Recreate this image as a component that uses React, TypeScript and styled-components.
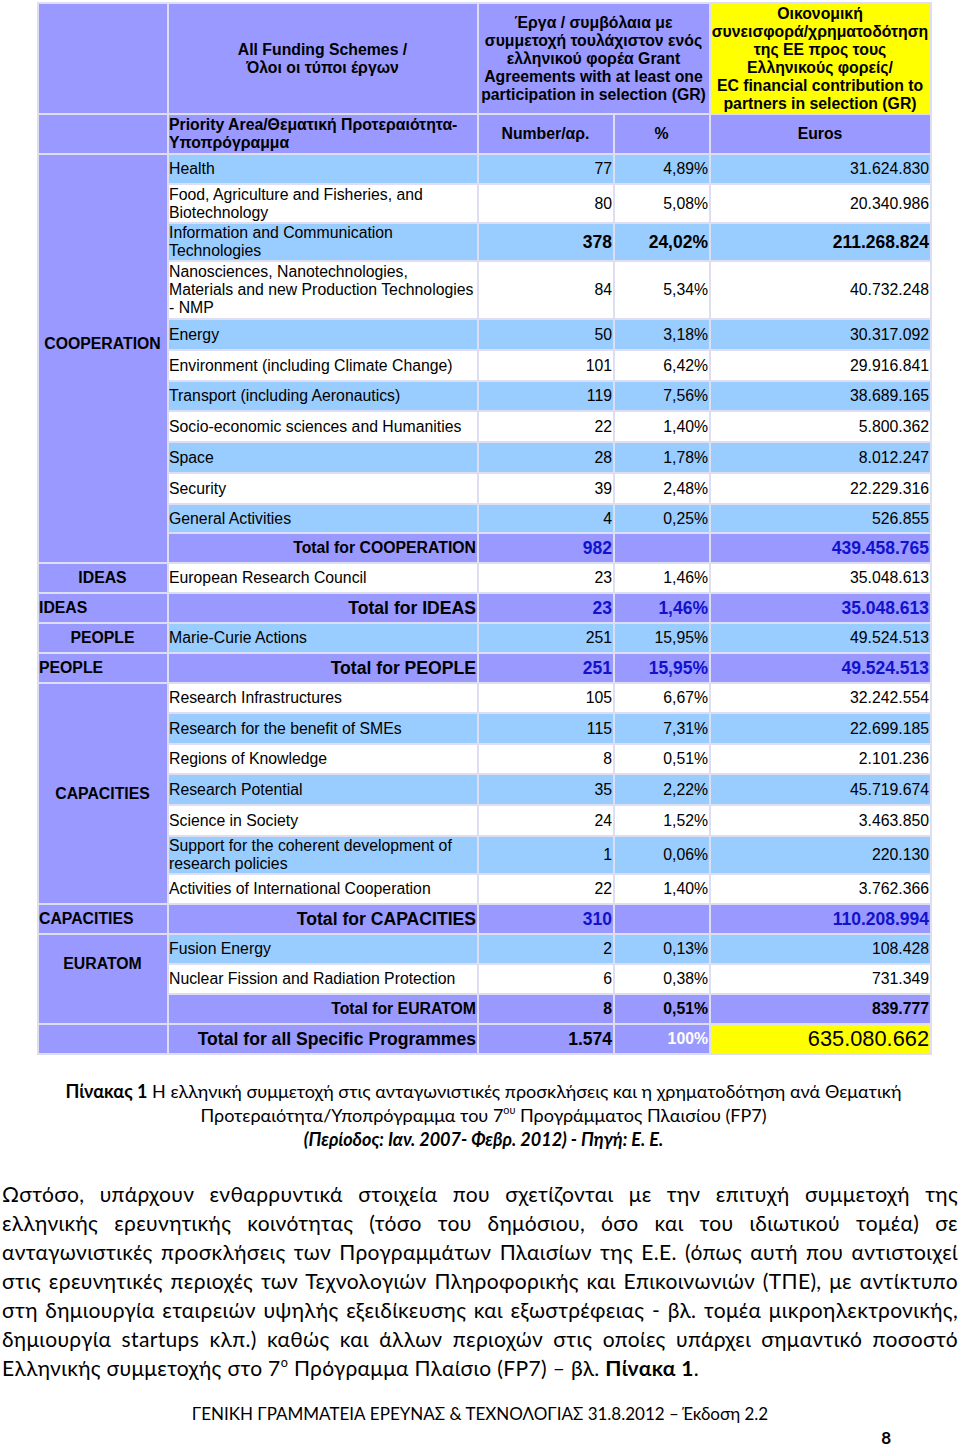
import React from 'react';
import styled, { createGlobalStyle } from 'styled-components';

const GlobalStyle = createGlobalStyle`
  html, body { margin: 0; padding: 0; background: #ffffff; }
  body { font-family: "Liberation Sans", Arial, sans-serif; color: #000; }
`;

const PURPLE = '#9999ff';
const BLUE = '#99ccff';
const YELLOW = '#ffff00';
const LINE = '#dedef3';
const TOTAL_BLUE = '#1212cc';

type Tone = 'purple' | 'blue' | 'white' | 'yellow';
const toneBg: Record<Tone, string> = { purple: PURPLE, blue: BLUE, white: '#ffffff', yellow: YELLOW };

const Page = styled.div`
  width: 960px;
  padding-top: 2px;
`;

const Table = styled.table`
  margin-left: 37px;
  width: 893px;
  table-layout: fixed;
  border-collapse: collapse;
  font-size: 15.8px;
  line-height: 18px;
`;

const Row = styled.tr<{ $h: number }>`
  height: ${(p) => p.$h}px;
`;

const BaseCell = styled.td<{ $tone: Tone }>`
  background: ${(p) => toneBg[p.$tone]};
  border: 2px solid ${LINE};
  padding: 0 1px 0 0;
  vertical-align: middle;
  overflow: hidden;
  white-space: nowrap;
`;

const HeadCell = styled(BaseCell)<{ $align?: 'left' | 'center' }>`
  font-weight: bold;
  text-align: ${(p) => p.$align ?? 'center'};
`;

const ProgCell = styled(BaseCell)<{ $align?: 'left' | 'center'; $lift?: number }>`
  font-weight: bold;
  text-align: ${(p) => p.$align ?? 'center'};
  padding-bottom: ${(p) => p.$lift ?? 0}px;
`;

const LabelCell = styled(BaseCell)<{ $total?: 'md' | 'lg' }>`
  text-align: ${(p) => (p.$total ? 'right' : 'left')};
  font-weight: ${(p) => (p.$total ? 'bold' : 'normal')};
  font-size: ${(p) => (p.$total === 'lg' ? '17.6px' : '15.8px')};
`;

type ValStyle = 'plain' | 'strong' | 'blue' | 'bold' | 'grand' | 'white' | 'huge';

const ValCell = styled(BaseCell)<{ $v: ValStyle }>`
  text-align: right;
  font-weight: ${(p) => (p.$v === 'plain' || p.$v === 'huge' ? 'normal' : 'bold')};
  font-size: ${(p) =>
    p.$v === 'huge' ? '21.8px' : p.$v === 'strong' || p.$v === 'blue' || p.$v === 'grand' ? '17.5px' : '15.8px'};
  color: ${(p) => (p.$v === 'blue' ? TOTAL_BLUE : p.$v === 'white' ? '#ffffff' : '#000000')};
`;

type Item = { label: React.ReactNode; num: string; pct: string; eur: string; tone: 'blue' | 'white'; h: number; strong?: boolean };
type Total = { label: string; size: 'md' | 'lg'; num: string; pct: string; eur: string; v: ValStyle; h: number };
type Group = { name: string; joined: boolean; items: Item[]; total: Total };

const groups: Group[] = [
  {
    name: 'COOPERATION',
    joined: true,
    items: [
      { label: 'Health', num: '77', pct: '4,89%', eur: '31.624.830', tone: 'blue', h: 30 },
      { label: <>Food, Agriculture and Fisheries, and<br />Biotechnology</>, num: '80', pct: '5,08%', eur: '20.340.986', tone: 'white', h: 39 },
      { label: <>Information and Communication<br />Technologies</>, num: '378', pct: '24,02%', eur: '211.268.824', tone: 'blue', h: 38, strong: true },
      { label: <>Nanosciences, Nanotechnologies,<br />Materials and new Production Technologies<br />- NMP</>, num: '84', pct: '5,34%', eur: '40.732.248', tone: 'white', h: 58 },
      { label: 'Energy', num: '50', pct: '3,18%', eur: '30.317.092', tone: 'blue', h: 31 },
      { label: 'Environment (including Climate Change)', num: '101', pct: '6,42%', eur: '29.916.841', tone: 'white', h: 31 },
      { label: 'Transport (including Aeronautics)', num: '119', pct: '7,56%', eur: '38.689.165', tone: 'blue', h: 30 },
      { label: 'Socio-economic sciences and Humanities', num: '22', pct: '1,40%', eur: '5.800.362', tone: 'white', h: 31 },
      { label: 'Space', num: '28', pct: '1,78%', eur: '8.012.247', tone: 'blue', h: 31 },
      { label: 'Security', num: '39', pct: '2,48%', eur: '22.229.316', tone: 'white', h: 31 },
      { label: 'General Activities', num: '4', pct: '0,25%', eur: '526.855', tone: 'blue', h: 29 },
    ],
    total: { label: 'Total for COOPERATION', size: 'md', num: '982', pct: '', eur: '439.458.765', v: 'blue', h: 30 },
  },
  {
    name: 'IDEAS',
    joined: false,
    items: [{ label: 'European Research Council', num: '23', pct: '1,46%', eur: '35.048.613', tone: 'white', h: 30 }],
    total: { label: 'Total for IDEAS', size: 'lg', num: '23', pct: '1,46%', eur: '35.048.613', v: 'blue', h: 30 },
  },
  {
    name: 'PEOPLE',
    joined: false,
    items: [{ label: 'Marie-Curie Actions', num: '251', pct: '15,95%', eur: '49.524.513', tone: 'blue', h: 30 }],
    total: { label: 'Total for PEOPLE', size: 'lg', num: '251', pct: '15,95%', eur: '49.524.513', v: 'blue', h: 30 },
  },
  {
    name: 'CAPACITIES',
    joined: false,
    items: [
      { label: 'Research Infrastructures', num: '105', pct: '6,67%', eur: '32.242.554', tone: 'white', h: 30 },
      { label: 'Research for the benefit of SMEs', num: '115', pct: '7,31%', eur: '22.699.185', tone: 'blue', h: 31 },
      { label: 'Regions of Knowledge', num: '8', pct: '0,51%', eur: '2.101.236', tone: 'white', h: 30 },
      { label: 'Research Potential', num: '35', pct: '2,22%', eur: '45.719.674', tone: 'blue', h: 31 },
      { label: 'Science in Society', num: '24', pct: '1,52%', eur: '3.463.850', tone: 'white', h: 31 },
      { label: <>Support for the coherent development of<br />research policies</>, num: '1', pct: '0,06%', eur: '220.130', tone: 'blue', h: 38 },
      { label: 'Activities of International Cooperation', num: '22', pct: '1,40%', eur: '3.762.366', tone: 'white', h: 30 },
    ],
    total: { label: 'Total for CAPACITIES', size: 'lg', num: '310', pct: '', eur: '110.208.994', v: 'blue', h: 30 },
  },
  {
    name: 'EURATOM',
    joined: true,
    items: [
      { label: 'Fusion Energy', num: '2', pct: '0,13%', eur: '108.428', tone: 'blue', h: 30 },
      { label: 'Nuclear Fission and Radiation Protection', num: '6', pct: '0,38%', eur: '731.349', tone: 'white', h: 30 },
    ],
    total: { label: 'Total for EURATOM', size: 'md', num: '8', pct: '0,51%', eur: '839.777', v: 'bold', h: 30 },
  },
];

const Caption = styled.div`
  margin: 24px 0 0 37px;
  width: 893px;
  text-align: center;
  font-family: Lato, "Noto Sans", sans-serif;
  font-size: 18px;
  line-height: 24px;
`;

const CapLine = styled.div<{ $emph?: boolean }>`
  font-weight: ${(p) => (p.$emph ? 'bold' : 'normal')};
  font-style: ${(p) => (p.$emph ? 'italic' : 'normal')};
`;

const Sup = styled.sup`
  font-size: 0.6em;
  line-height: 0;
  vertical-align: 0.7em;
`;

const Para = styled.div`
  margin: 28px 2px 0 2px;
  font-family: Lato, "Noto Sans", sans-serif;
  font-size: 21px;
  letter-spacing: 0.35px;
  line-height: 29px;
`;

const ParaLine = styled.span<{ $last?: boolean }>`
  display: block;
  text-align: ${(p) => (p.$last ? 'left' : 'justify')};
  text-align-last: ${(p) => (p.$last ? 'left' : 'justify')};
`;

const Footer = styled.div`
  margin-top: 20px;
  text-align: center;
  font-family: Lato, "Noto Sans", sans-serif;
  font-size: 17px;
  line-height: 24px;
`;

const PageNo = styled.div`
  width: 891px;
  text-align: right;
  font-family: Lato, "Noto Sans", sans-serif;
  font-weight: bold;
  font-size: 17px;
  line-height: 24px;
`;

const paraLines: React.ReactNode[] = [
  'Ωστόσο, υπάρχουν ενθαρρυντικά στοιχεία που σχετίζονται με την επιτυχή συμμετοχή της',
  'ελληνικής ερευνητικής κοινότητας (τόσο του δημόσιου, όσο και του ιδιωτικού τομέα) σε',
  'ανταγωνιστικές προσκλήσεις των Προγραμμάτων Πλαισίων της Ε.Ε. (όπως αυτή που αντιστοιχεί',
  'στις ερευνητικές περιοχές των Τεχνολογιών Πληροφορικής και Επικοινωνιών (ΤΠΕ),  με αντίκτυπο',
  'στη δημιουργία εταιρειών υψηλής εξειδίκευσης και εξωστρέφειας - βλ. τομέα μικροηλεκτρονικής,',
  'δημιουργία startups κλπ.) καθώς και άλλων περιοχών στις οποίες υπάρχει σημαντικό ποσοστό',
];

function GroupRows({ g }: { g: Group }) {
  const span = g.items.length + (g.joined ? 1 : 0);
  return (
    <>
      {g.items.map((it, i) => (
        <Row $h={it.h} key={i}>
          {i === 0 && (
            <ProgCell $tone="purple" rowSpan={span} $lift={g.joined ? g.total.h : 0}>
              {g.name}
            </ProgCell>
          )}
          <LabelCell $tone={it.tone}>{it.label}</LabelCell>
          <ValCell $tone={it.tone} $v={it.strong ? 'strong' : 'plain'}>{it.num}</ValCell>
          <ValCell $tone={it.tone} $v={it.strong ? 'strong' : 'plain'}>{it.pct}</ValCell>
          <ValCell $tone={it.tone} $v={it.strong ? 'strong' : 'plain'}>{it.eur}</ValCell>
        </Row>
      ))}
      <Row $h={g.total.h}>
        {!g.joined && (
          <ProgCell $tone="purple" $align="left">
            {g.name}
          </ProgCell>
        )}
        <LabelCell $tone="purple" $total={g.total.size}>{g.total.label}</LabelCell>
        <ValCell $tone="purple" $v={g.total.v}>{g.total.num}</ValCell>
        <ValCell $tone="purple" $v={g.total.v}>{g.total.pct}</ValCell>
        <ValCell $tone="purple" $v={g.total.v}>{g.total.eur}</ValCell>
      </Row>
    </>
  );
}

export default function App() {
  return (
    <Page>
      <GlobalStyle />
      <Table>
        <colgroup>
          <col style={{ width: 130 }} />
          <col style={{ width: 310 }} />
          <col style={{ width: 136 }} />
          <col style={{ width: 96 }} />
          <col style={{ width: 221 }} />
        </colgroup>
        <tbody>
          <Row $h={111}>
            <HeadCell $tone="purple" />
            <HeadCell $tone="purple">
              All Funding Schemes /<br />Όλοι οι τύποι έργων
            </HeadCell>
            <HeadCell $tone="purple" colSpan={2}>
              Έργα / συμβόλαια με<br />συμμετοχή τουλάχιστον ενός<br />ελληνικού φορέα Grant<br />Agreements with at least one<br />participation in selection (GR)
            </HeadCell>
            <HeadCell $tone="yellow">
              Οικονομική<br />συνεισφορά/χρηματοδότηση<br />της ΕΕ προς τους<br />Ελληνικούς φορείς/<br />EC financial contribution to<br />partners in selection (GR)
            </HeadCell>
          </Row>
          <Row $h={40}>
            <HeadCell $tone="purple" />
            <HeadCell $tone="purple" $align="left">
              Priority Area/Θεματική Προτεραιότητα-<br />Υποπρόγραμμα
            </HeadCell>
            <HeadCell $tone="purple">Number/αρ.</HeadCell>
            <HeadCell $tone="purple">%</HeadCell>
            <HeadCell $tone="purple">Euros</HeadCell>
          </Row>
          {groups.map((g) => (
            <GroupRows g={g} key={g.name} />
          ))}
          <Row $h={30}>
            <ProgCell $tone="purple" />
            <LabelCell $tone="purple" $total="lg">Total for all Specific Programmes</LabelCell>
            <ValCell $tone="purple" $v="grand">1.574</ValCell>
            <ValCell $tone="purple" $v="white">100%</ValCell>
            <ValCell $tone="yellow" $v="huge">635.080.662</ValCell>
          </Row>
        </tbody>
      </Table>

      <Caption>
        <CapLine>
          <b>Πίνακας 1</b> Η ελληνική συμμετοχή στις ανταγωνιστικές προσκλήσεις και η χρηματοδότηση ανά Θεματική
        </CapLine>
        <CapLine>
          Προτεραιότητα/Υποπρόγραμμα του 7<Sup>ου</Sup> Προγράμματος Πλαισίου (FP7)
        </CapLine>
        <CapLine $emph>(Περίοδος: Ιαν. 2007- Φεβρ. 2012) - Πηγή: Ε. Ε.</CapLine>
      </Caption>

      <Para>
        {paraLines.map((l, i) => (
          <ParaLine key={i}>{l}</ParaLine>
        ))}
        <ParaLine $last>
          Ελληνικής συμμετοχής στο 7<Sup>ο</Sup> Πρόγραμμα Πλαίσιο (FP7) – βλ. <b>Πίνακα 1</b>.
        </ParaLine>
      </Para>

      <Footer>ΓΕΝΙΚΗ ΓΡΑΜΜΑΤΕΙΑ ΕΡΕΥΝΑΣ &amp; ΤΕΧΝΟΛΟΓΙΑΣ 31.8.2012 – Έκδοση 2.2</Footer>
      <PageNo>8</PageNo>
    </Page>
  );
}
